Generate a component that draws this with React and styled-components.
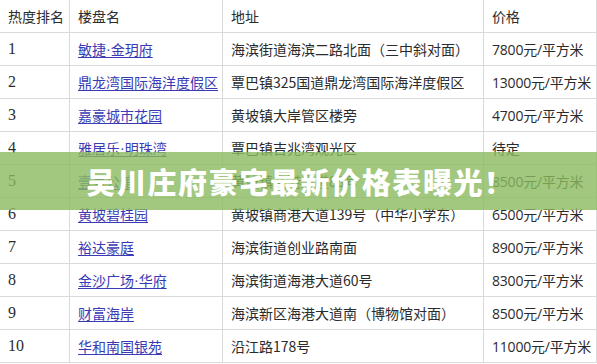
import styled, { createGlobalStyle } from "styled-components";

const rows = [
  { rank: 1, name: "敏捷·金玥府", addr: "海滨街道海滨二路北面（三中斜对面）", price: "7800元/平方米" },
  { rank: 2, name: "鼎龙湾国际海洋度假区", addr: "覃巴镇325国道鼎龙湾国际海洋度假区", price: "13000元/平方米" },
  { rank: 3, name: "嘉豪城市花园", addr: "黄坡镇大岸管区楼旁", price: "4700元/平方米" },
  { rank: 4, name: "雅居乐·明珠湾", addr: "覃巴镇吉兆湾观光区", price: "待定" },
  { rank: 5, name: "壹号公馆", addr: "黄坡镇商港大道88号", price: "8500元/平方米" },
  { rank: 6, name: "黄坡碧桂园", addr: "黄坡镇商港大道139号（中华小学东）", price: "6500元/平方米" },
  { rank: 7, name: "裕达豪庭", addr: "海滨街道创业路南面", price: "8900元/平方米" },
  { rank: 8, name: "金沙广场·华府", addr: "海滨街道海港大道60号", price: "8300元/平方米" },
  { rank: 9, name: "财富海岸", addr: "海滨新区海港大道南（博物馆对面）", price: "8500元/平方米" },
  { rank: 10, name: "华和南国银苑", addr: "沿江路178号", price: "11000元/平方米" },
];

function App() {
  return (
    <>
      <GlobalStyle />
      <Page>
        <Table>
          <Cell>热度排名</Cell>
          <Cell>楼盘名</Cell>
          <Cell>地址</Cell>
          <Cell $price>价格</Cell>
          {rows.map((r) => (
            <Row key={r.rank}>
              <Cell $num>{r.rank}</Cell>
              <Cell>
                <Link href="#">{r.name}</Link>
              </Cell>
              <Cell>{r.addr}</Cell>
              <Cell $price>{r.price}</Cell>
            </Row>
          ))}
        </Table>
        <Banner>
          <Headline>吴川庄府豪宅最新价格表曝光！</Headline>
        </Banner>
      </Page>
    </>
  );
}

const GlobalStyle = createGlobalStyle`
  body {
    margin: 0;
    background: #fff;
    font-family: "Noto Sans CJK SC", sans-serif;
  }
`;

const Page = styled.div`
  position: relative;
  width: 597px;
  height: 364px;
  overflow: hidden;
  background: #fff;
`;

const Table = styled.div`
  display: grid;
  grid-template-columns: 70px 153px 261px 1fr;
`;

const Row = styled.div`
  display: contents;
`;

const Cell = styled.div`
  height: 33px;
  box-sizing: border-box;
  border-right: 1px solid #dadada;
  border-bottom: 1px solid #dadada;
  padding: 0 0 1px 8px;
  display: flex;
  align-items: center;
  color: #2b2b2b;
  white-space: nowrap;
  font-family: ${({ $num, $price }) =>
    $num
      ? '"Liberation Serif", serif'
      : $price
      ? '"Open Sans", "Noto Sans CJK SC", sans-serif'
      : '"Noto Sans CJK SC", sans-serif'};
  font-size: ${({ $num }) => ($num ? "16px" : "14px")};
  letter-spacing: ${({ $price }) => ($price ? "-0.2px" : "0")};
`;

const Link = styled.a`
  color: #3a3ab4;
  font-family: "Liberation Serif", "Noto Sans CJK SC", sans-serif;
  text-decoration: underline;
  text-underline-offset: 2px;
`;

const Banner = styled.div`
  position: absolute;
  left: 0;
  right: 0;
  top: 152px;
  height: 58px;
  background: rgba(138, 186, 94, 0.8);
  display: flex;
  align-items: center;
  justify-content: center;
`;

const Headline = styled.h1`
  margin: 0 0 0 4px;
  color: #fff;
  font-size: 29px;
  font-weight: 900;
  letter-spacing: 1.6px;
  font-family: "Noto Sans CJK SC", sans-serif;
`;

export default App;
